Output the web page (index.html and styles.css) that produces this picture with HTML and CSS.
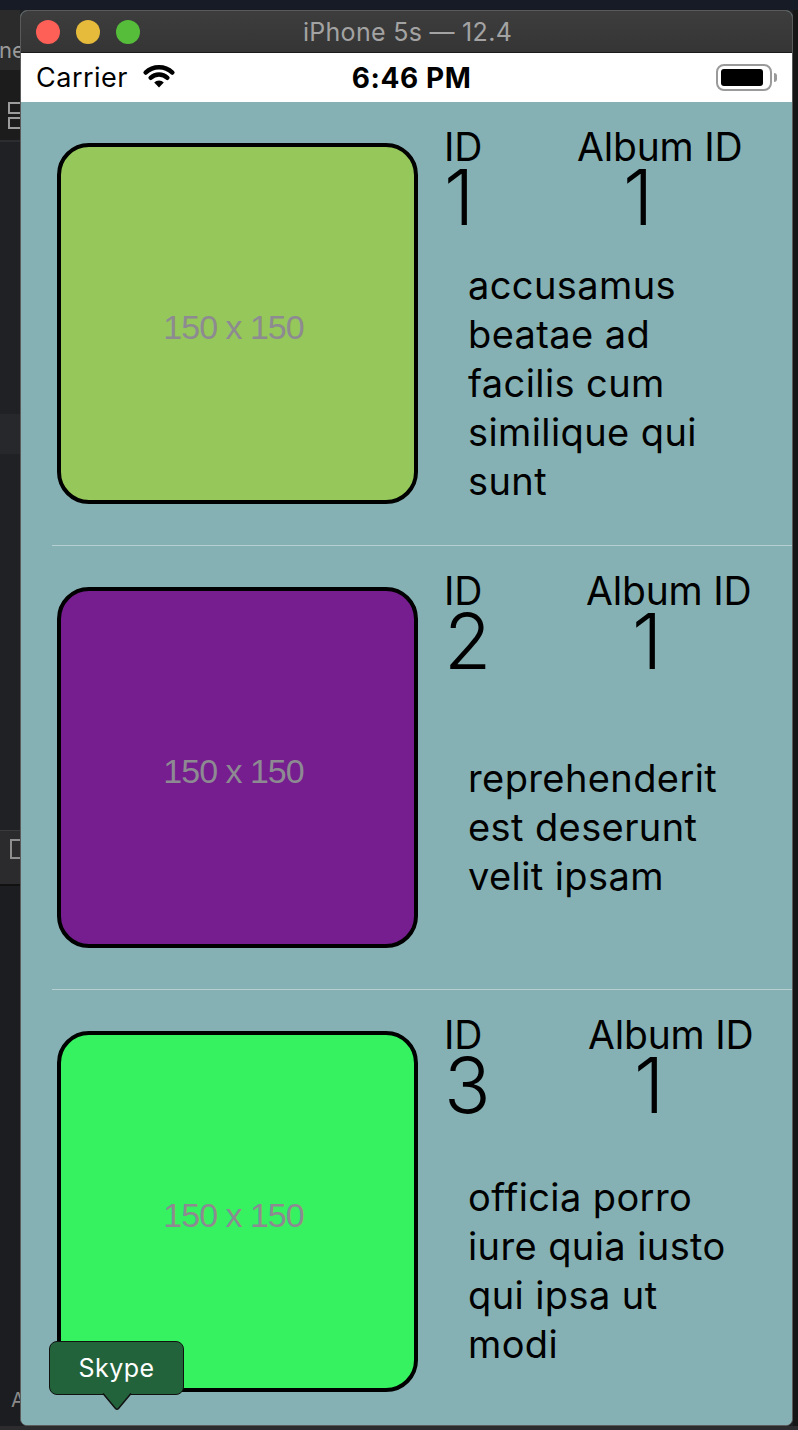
FILE: index.html
```html
<!DOCTYPE html>
<html>
<head>
<meta charset="utf-8">
<link rel="stylesheet" href="styles.css">
</head>
<body>
<div class="topbar"></div>
<div class="main">
  <div class="leftstrip">
    <div class="ls-top"><span class="ls-text">ne</span></div>
    <div class="ls-tools"><span class="ls-sq"></span><span class="ls-sq ls-sq2"></span></div>
    <div class="ls-body">
      <div class="ls-gap1"></div>
      <div class="ls-band"></div>
      <div class="ls-gap2"></div>
      <div class="ls-panel"><span class="ls-icon"></span></div>
      <div class="ls-rest"><span class="ls-a">A</span></div>
    </div>
  </div>
  <div class="window">
    <div class="titlebar">
      <div class="lights">
        <span class="light red"></span>
        <span class="light yellow"></span>
        <span class="light green"></span>
      </div>
      <div class="title">iPhone 5s — 12.4</div>
    </div>
    <div class="statusbar">
      <div class="sb-left">
        <span class="carrier">Carrier</span>
        <svg class="wifi" width="34" height="24" viewBox="0 0 34 24">
          <path d="M3.6 8.6 A19.5 19.5 0 0 1 30.4 8.6" fill="none" stroke="#000" stroke-width="4.4" stroke-linecap="round"/>
          <path d="M8.6 13.8 A12.3 12.3 0 0 1 25.4 13.8" fill="none" stroke="#000" stroke-width="4.4" stroke-linecap="round"/>
          <path d="M17 23.5 L12.2 18.6 A6.6 6.6 0 0 1 21.8 18.6 Z" fill="#000"/>
        </svg>
      </div>
      <div class="sb-time">6:46 PM</div>
      <div class="sb-right">
        <div class="battery"><div class="battery-fill"></div></div>
        <div class="battery-nub"></div>
      </div>
    </div>
    <div class="content">
      <div class="row">
        <div class="thumb thumb-1"><span>150 x 150</span></div>
        <div class="info">
          <div class="head">
            <div class="col-id"><div class="label">ID</div><div class="num">1</div></div>
            <div class="col-album"><div class="label">Album ID</div><div class="num num-album">1</div></div>
          </div>
          <div class="desc"><p>accusamus beatae ad facilis cum similique qui sunt</p></div>
        </div>
      </div>
      <div class="sep"></div>
      <div class="row">
        <div class="thumb thumb-2"><span>150 x 150</span></div>
        <div class="info">
          <div class="head">
            <div class="col-id"><div class="label">ID</div><div class="num">2</div></div>
            <div class="col-album col-album-b"><div class="label">Album ID</div><div class="num num-album">1</div></div>
          </div>
          <div class="desc"><p>reprehenderit est deserunt velit ipsam</p></div>
        </div>
      </div>
      <div class="sep"></div>
      <div class="row">
        <div class="thumb thumb-3"><span>150 x 150</span></div>
        <div class="info">
          <div class="head">
            <div class="col-id"><div class="label">ID</div><div class="num">3</div></div>
            <div class="col-album col-album-c"><div class="label">Album ID</div><div class="num num-album">1</div></div>
          </div>
          <div class="desc"><p>officia porro iure quia iusto qui ipsa ut modi</p></div>
        </div>
      </div>
    </div>
    <div class="tooltip">
      <span>Skype</span>
      <svg class="tip-arrow" width="30" height="18" viewBox="0 0 30 18">
        <path d="M1 0 L13.5 15.5 Q15 17 16.5 15.5 L29 0 Z" fill="#23633b"/>
        <path d="M1 0.5 L13.5 15.5 Q15 17 16.5 15.5 L29 0.5" fill="none" stroke="#111" stroke-width="1.5"/>
      </svg>
    </div>
  </div>
  <div class="rightstrip"></div>
</div>
<div class="bottombar"></div>
</body>
</html>
```

FILE: styles.css
```css
* { box-sizing: border-box; }
html, body { margin: 0; padding: 0; }
body {
  width: 798px;
  height: 1430px;
  overflow: hidden;
  background: #1e1f22;
  font-family: Inter, "Noto Sans", sans-serif;
  display: flex;
  flex-direction: column;
}
.topbar { height: 10px; background: #171b26; flex: none; }
.main { display: flex; height: 1416px; flex: none; }
.bottombar { flex: 1; background: #2c2c2e; }

/* left strip (background app) */
.leftstrip { width: 20px; flex: none; display: flex; flex-direction: column; background: #202124; overflow: hidden; }
.ls-top { height: 60px; background: #2b2b2b; position: relative; }
.ls-text { position: absolute; left: -1px; top: 27px; color: #9a9a9a; font-size: 22px; font-family: Inter, sans-serif; }
.ls-tools { height: 72px; background: #1c1c1d; border-bottom: 2px solid #2c2d30; display: flex; flex-direction: column; align-items: flex-end; justify-content: flex-end; gap: 3px; padding-bottom: 11px; }
.ls-sq { width: 12px; height: 12px; border: 2px solid #9c9c9c; border-right: none; }
.ls-body { flex: 1; display: flex; flex-direction: column; }
.ls-gap1 { height: 272px; }
.ls-band { height: 40px; background: #27282c; }
.ls-gap2 { height: 376px; background: #202124; }
.ls-panel { height: 56px; background: #2b2b2d; border-top: 1px solid #3a3a3c; border-bottom: 2px solid #111; position: relative; }
.ls-icon { position: absolute; left: 10px; top: 8px; width: 14px; height: 20px; border: 2px solid #8e8e8e; }
.ls-rest { flex: 1; background: #1c1d20; position: relative; }
.ls-a { position: absolute; left: 11px; bottom: 14px; color: #8a8a8a; font-size: 20px; }

.rightstrip { flex: 1; background: #161616; }

/* simulator window */
.window {
  width: 773px;
  flex: none;
  display: flex;
  flex-direction: column;
  border-radius: 7px;
  overflow: hidden;
  position: relative;
  border: 1px solid #5a5a5a;
  background: #86b1b4;
}
.titlebar {
  height: 42px;
  flex: none;
  background: linear-gradient(#3d3d3d, #353535);
  border-bottom: 1px solid #1c1c1c;
  display: flex;
  align-items: center;
  position: relative;
}
.lights { display: flex; gap: 16px; padding-left: 15px; }
.light { width: 24px; height: 24px; border-radius: 50%; display: block; }
.red { background: #fe5f57; }
.yellow { background: #e6bb3b; }
.green { background: #55bd3a; }
.title {
  position: absolute;
  left: 0; right: 0; top: 0; bottom: 0;
  text-align: center;
  line-height: 42px;
  color: #a3a3a3;
  font-size: 25px;
  padding-left: 2px;
  letter-spacing: 0.3px;
}
.statusbar {
  height: 49px;
  flex: none;
  background: #ffffff;
  display: grid;
  grid-template-columns: 1fr auto 1fr;
  align-items: center;
  padding: 0 15px 0 15px;
}
.sb-left { display: flex; align-items: center; gap: 14px; }
.carrier { font-size: 27px; color: #000; letter-spacing: 0.5px; }
.wifi { display: block; margin-top: -3px; }
.sb-time { font-size: 28px; font-weight: 700; color: #000; letter-spacing: 0.6px; padding-left: 10px; }
.sb-right { display: flex; align-items: center; justify-content: flex-end; gap: 2px; }
.battery { width: 56px; height: 27px; border: 2px solid #9a9a9a; border-radius: 8px; padding: 3px; }
.battery-fill { width: 42px; height: 100%; background: #000; border-radius: 3px; }
.battery-nub { width: 3px; height: 9px; background: #9a9a9a; border-radius: 0 3px 3px 0; }

.content { flex: 1; overflow: hidden; background: #86b1b4; }
.row { display: flex; height: 443px; }
.sep { height: 1px; background: #b6d0d2; margin-left: 31px; }
.thumb {
  width: 361px;
  height: 361px;
  margin: 41px 0 41px 36px;
  border: 4px solid #000;
  border-radius: 32px;
  display: flex;
  align-items: center;
  justify-content: center;
  flex: none;
  padding: 8px 8px 0 0;
}
.thumb span { font-family: "Liberation Sans", Arial, sans-serif; font-size: 34px; letter-spacing: -1px; color: #8d8a92; }
.thumb-1 { background: #95c75a; }
.thumb-2 { background: #761e90; }
.thumb-3 { background: #36f260; }
.info { flex: 1; display: flex; flex-direction: column; padding: 25px 0 6px 26px; color: #000; }
.head { display: flex; }
.col-id { width: 133px; }
.col-album-b { padding-left: 9px; }
.col-album-c { padding-left: 11px; }
.label { font-size: 39px; line-height: 40px; letter-spacing: -0.2px; }
.num { font-size: 77px; line-height: 60px; font-weight: 300; }
.num-album { padding-left: 46px; }
.desc { flex: 1; display: flex; flex-direction: column; justify-content: center; padding-left: 24px; }
.desc p { margin: 0; width: 268px; font-size: 38px; line-height: 49px; letter-spacing: 0.4px; }

.tooltip {
  position: absolute;
  left: 28px;
  top: 1330px;
  width: 135px;
  height: 54px;
  background: #23633b;
  border: 1.5px solid #111;
  border-radius: 8px;
  display: flex;
  align-items: center;
  justify-content: center;
  color: #fff;
  font-size: 25px;
  letter-spacing: 0.5px;
}
.tip-arrow { position: absolute; left: 52px; top: 51px; }
```
